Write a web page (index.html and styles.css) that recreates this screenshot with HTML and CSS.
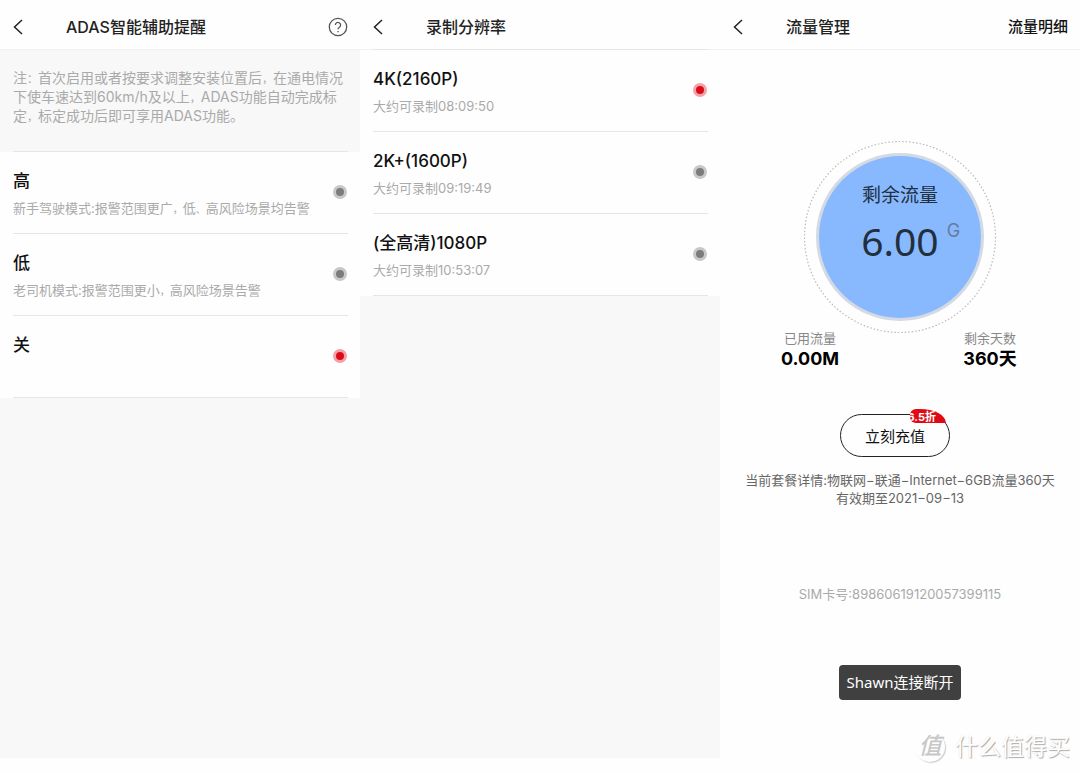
FILE: index.html
```html
<!DOCTYPE html>
<html lang="zh-CN">
<head>
<meta charset="utf-8">
<meta name="viewport" content="width=device-width, initial-scale=1">
<title>行车记录仪设置</title>
<link rel="stylesheet" href="styles.css">
</head>
<body>
<main class="screens">
  <section class="screen">
    <header class="bar">
      <button class="icon-button" type="button" aria-label="返回"><svg width="10" height="16" viewBox="0 0 10 16"><path d="M9 1 1.500 8 9 15"/></svg></button>
      <h1 class="bar-title">ADAS智能辅助提醒</h1>
      <button class="icon-button help" type="button" aria-label="帮助"><svg width="20" height="20" viewBox="0 0 20 20"><circle cx="10" cy="10" r="8.700"/><path d="M7.400 8.100a2.600 2.600 0 1 1 4 2.100c-.9.600-1.400 1-1.400 2.100M10 14v1.300"/></svg></button>
    </header>
    <p class="note">注<span class="mark">：</span>首次启用或者按要求调整安装位置后<span class="mark">，</span>在通电情况<br>下使车速达到60km/h及以上<span class="mark">，</span>ADAS功能自动完成标<br>定<span class="mark">，</span>标定成功后即可享用ADAS功能。</p>
    <div class="options">
      <label class="option">
        <span class="option-text"><span class="option-name">高</span><span class="option-desc">新手驾驶模式:报警范围更广<span class="mark">，</span>低<span class="mark">、</span>高风险场景均告警</span></span>
        <input class="radio" type="radio" name="adas">
      </label>
      <label class="option">
        <span class="option-text"><span class="option-name">低</span><span class="option-desc">老司机模式:报警范围更小<span class="mark">，</span>高风险场景告警</span></span>
        <input class="radio" type="radio" name="adas">
      </label>
      <label class="option">
        <span class="option-text"><span class="option-name">关</span></span>
        <input class="radio" type="radio" name="adas" checked>
      </label>
    </div>
  </section>

  <section class="screen">
    <header class="bar">
      <button class="icon-button" type="button" aria-label="返回"><svg width="10" height="16" viewBox="0 0 10 16"><path d="M9 1 1.500 8 9 15"/></svg></button>
      <h1 class="bar-title">录制分辨率</h1>
    </header>
    <div class="options overlap">
      <label class="option">
        <span class="option-text"><span class="option-name">4K(2160P)</span><span class="option-desc">大约可录制08:09:50</span></span>
        <input class="radio" type="radio" name="resolution" checked>
      </label>
      <label class="option">
        <span class="option-text"><span class="option-name">2K+(1600P)</span><span class="option-desc">大约可录制09:19:49</span></span>
        <input class="radio" type="radio" name="resolution">
      </label>
      <label class="option">
        <span class="option-text"><span class="option-name">(全高清)1080P</span><span class="option-desc">大约可录制10:53:07</span></span>
        <input class="radio" type="radio" name="resolution">
      </label>
    </div>
  </section>

  <section class="screen data">
    <header class="bar">
      <button class="icon-button" type="button" aria-label="返回"><svg width="10" height="16" viewBox="0 0 10 16"><path d="M9 1 1.500 8 9 15"/></svg></button>
      <h1 class="bar-title">流量管理</h1>
      <a class="bar-link" href="#details">流量明细</a>
    </header>
    <div class="gauge">
      <svg class="gauge-ring" viewBox="0 0 194 194" aria-hidden="true">
        <circle class="dots" cx="97" cy="97" r="95.500"/>
        <circle class="disk" cx="97" cy="97" r="82.500"/>
      </svg>
      <span class="gauge-label">剩余流量</span>
      <span class="gauge-value">6.00<span class="gauge-unit">G</span></span>
    </div>
    <dl class="stats">
      <div><dt>已用流量</dt><dd>0.00M</dd></div>
      <div><dt>剩余天数</dt><dd>360天</dd></div>
    </dl>
    <button class="recharge" type="button">立刻充值<span class="badge">6.5折</span></button>
    <p class="plan">当前套餐详情:物联网−联通−Internet−6GB流量360天<br>有效期至2021−09−13</p>
    <p class="sim">SIM卡号:89860619120057399115</p>
    <div class="toast" role="status">Shawn连接断开</div>
  </section>
</main>
<div class="watermark"><span class="seal">值</span>什么值得买</div>
</body>
</html>
```
FILE: styles.css
```css
* {
  box-sizing: border-box;
}

body {
  position: relative;
  min-height: 100vh;
  margin: 0;
  padding-bottom: 15px;
  display: flex;
  background: #fefefe;
  color: #111;
  font-family: Inter, "Noto Sans CJK SC", sans-serif;
}

h1, p, dl, dd {
  margin: 0;
}

button {
  font: inherit;
  color: inherit;
  cursor: pointer;
}

.screens {
  flex: 1;
  display: grid;
  grid-template-columns: repeat(3, minmax(0, 1fr));
}

.screen {
  display: flex;
  flex-direction: column;
  background: #f8f8f8;
}

.screen.data {
  align-items: center;
  background: #fefefe;
}

.bar {
  align-self: stretch;
  display: flex;
  align-items: center;
  height: 50px;
  padding: 5px 12px 0 13px;
  background: #fefefe;
  border-bottom: 1px solid #f1f1f1;
}

.icon-button {
  display: flex;
  padding: 0;
  border: 0;
  background: none;
}

.icon-button svg {
  fill: none;
  stroke: #222;
  stroke-width: 1.5;
}

.help svg {
  stroke: #555;
  stroke-width: 1.3;
}

.bar-title {
  flex: 1;
  margin-left: 43px;
  font-size: 16px;
  font-weight: 500;
  line-height: 24px;
  color: #222;
}

.bar-link {
  font-size: 15px;
  font-weight: 500;
  line-height: 24px;
  color: #111;
  text-decoration: none;
}

.note {
  padding: 18px 0 26px 13px;
  font-size: 14px;
  line-height: 19px;
  color: #aaa;
  white-space: nowrap;
}

.mark {
  font-size: 11px;
  line-height: 1;
}

.options {
  background: linear-gradient(#fefefe, #fefefe) 0 1px / 100% 100% no-repeat;
  padding: 0 12px 0 13px;
}

.options.overlap {
  margin-top: -1px;
}

.option {
  display: flex;
  align-items: center;
  justify-content: space-between;
  height: 82px;
  padding-bottom: 2px;
  border-top: 1px solid #e6e6e6;
}

.option:last-child {
  height: 83px;
  border-bottom: 1px solid #e6e6e6;
}

.option-text {
  align-self: flex-start;
  display: flex;
  flex-direction: column;
  gap: 6px;
  padding-top: 17px;
}

.option-name {
  font-size: 17px;
  font-weight: 500;
  line-height: 24px;
}

.option-desc {
  font-size: 13px;
  line-height: 18px;
  color: #aaa;
  white-space: nowrap;
}

.option-desc .mark {
  font-size: 10px;
}

.radio {
  appearance: none;
  width: 14px;
  height: 14px;
  margin: 0 1px 0 0;
  border: 3px solid #c8c8c8;
  border-radius: 50%;
  background: #7c7c7c;
}

.radio:checked {
  border-color: #f3a3a8;
  background: #dc0b17;
}

.gauge {
  position: relative;
  display: flex;
  flex-direction: column;
  align-items: center;
  width: 194px;
  height: 194px;
  margin-top: 90px;
  padding-top: 42px;
}

.gauge-ring {
  position: absolute;
  inset: 0;
}

.dots {
  fill: none;
  stroke: #bbb;
  stroke-width: 1.2;
  stroke-dasharray: 1.5 2;
}

.disk {
  fill: #88b9ff;
  stroke: #d3dae3;
  stroke-width: 3;
}

.gauge-label {
  position: relative;
  font-size: 19px;
  line-height: 28px;
  color: #222f3d;
}

.gauge-value {
  position: relative;
  font-family: "Noto Sans", sans-serif;
  font-size: 39px;
  line-height: 62px;
  color: #222f3d;
}

.gauge-unit {
  position: absolute;
  left: 100%;
  top: 4px;
  margin-left: 8px;
  font-family: Inter, sans-serif;
  font-size: 18px;
  line-height: 34px;
  color: #667c99;
}

.stats {
  align-self: stretch;
  display: grid;
  grid-template-columns: 1fr 1fr;
  margin-top: -5px;
  text-align: center;
}

.stats dt {
  font-size: 13px;
  line-height: 18px;
  color: #888;
}

.stats dd {
  font-size: 18px;
  font-weight: 700;
  line-height: 24px;
  color: #000;
}

.recharge {
  position: relative;
  width: 110px;
  height: 43px;
  margin: 43px 10px 0 0;
  padding: 0;
  border: 1px solid #222;
  border-radius: 22px;
  background: #fefefe;
  font-size: 15px;
}

.badge {
  position: absolute;
  top: -6px;
  right: 3px;
  width: 36px;
  height: 14px;
  padding: 2px 10px 0 0;
  display: flex;
  justify-content: flex-end;
  align-items: center;
  overflow: hidden;
  border-radius: 6px 26px 0 6px / 6px 14px 0 6px;
  background: #e00a14;
  color: #fff;
  font-size: 11px;
  font-weight: 700;
  line-height: 12px;
  white-space: nowrap;
}

.plan {
  margin-top: 14px;
  font-size: 13px;
  line-height: 18px;
  color: #666;
  text-align: center;
  white-space: nowrap;
}

.sim {
  margin-top: 78px;
  font-size: 13px;
  line-height: 18px;
  color: #aaa;
}

.toast {
  margin-top: 62px;
  padding: 5px 8px 6px;
  border-radius: 4px;
  background: #404040;
  color: #fff;
  font-family: "Noto Sans", "Noto Sans CJK SC", sans-serif;
  font-size: 15px;
  line-height: 24px;
}

.watermark {
  position: absolute;
  right: 10px;
  bottom: 10px;
  display: flex;
  align-items: center;
  gap: 10px;
  font-size: 23px;
  line-height: 32px;
  color: #fff;
  text-shadow: 1px 1px 1px #aaa, 0 0 1px #ddd;
}

.seal {
  width: 30px;
  height: 30px;
  border-radius: 50%;
  box-shadow: 1px 1px 1px #ccc;
  color: #c8c8c8;
  font-weight: 500;
  font-style: italic;
  line-height: 29px;
  text-align: center;
  text-shadow: none;
}
```
